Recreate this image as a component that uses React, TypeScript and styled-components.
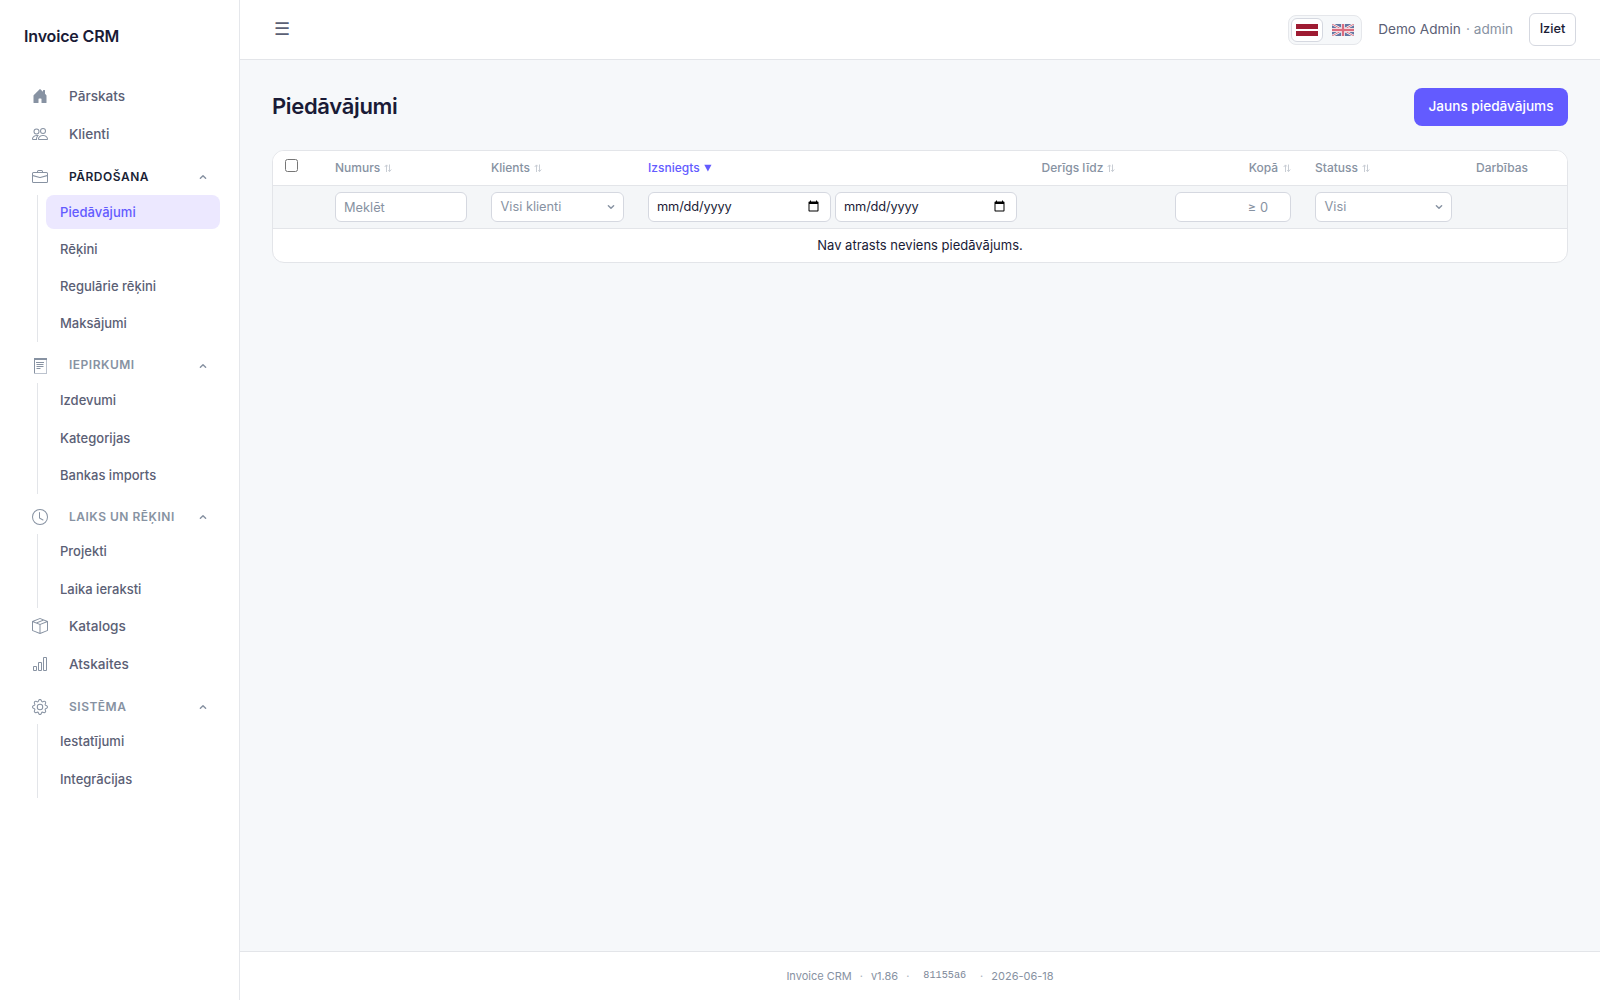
import React from "react";
import styled, { createGlobalStyle, css } from "styled-components";
import { BsHouseDoorFill, BsPeople, BsBriefcase, BsClock, BsBoxSeam, BsBarChart, BsGear } from "react-icons/bs";

const Global = createGlobalStyle`
  *, *::before, *::after { box-sizing: border-box; }
  body { margin: 0; font-family: Inter, "Noto Sans", sans-serif; font-size: 14px; line-height: 1.5; color: #1a1b36; background: #f6f8fa; }
  button, input, select { font-family: inherit; }
`;
const Shell = styled.div`display: flex; height: 1000px; width: 1600px; overflow: hidden;`;
const Sidebar = styled.aside`width: 240px; flex: none; background: #fff; border-right: 1px solid #e5e7eb;`;
const Brand = styled.div`padding: 24px 24px 0; height: 77px; font-size: 16px; line-height: 24px; font-weight: 600; letter-spacing: -0.16px;`;
const Nav = styled.nav`padding: 0 19px 0 20px;`;
const NavLink = styled.a`
  display: flex; align-items: center; height: 37.8px; padding-left: 12px;
  font-size: 13.6px; line-height: 20px; font-weight: 500; color: #5b6075;
`;
const NavIcon = styled.span`display: flex; width: 16px; margin-right: 21px; color: #8792a2;`;
const GroupHead = styled.div<{ $h: number; $pt: number; $lift: number; $active?: boolean }>`
  display: flex; align-items: center; height: ${p => p.$h}px; padding: ${p => p.$pt}px 13px 0 12px;
  font-size: 12px; line-height: 18px; font-weight: 600; letter-spacing: 0.5px; color: ${p => (p.$active ? "#1a1f36" : "#8792a2")};
  & > b { flex: 1; font-weight: 600; padding-bottom: ${p => p.$lift}px; }
`;
const SubList = styled.div<{ $h: number; $gap: number }>`
  display: flex; flex-direction: column; gap: ${p => p.$gap}px; height: ${p => p.$h}px; margin-left: 17px; padding-left: 8px; border-left: 1px solid #e3e5e9;
`;
const SubLink = styled.a<{ $active?: boolean }>`
  display: flex; align-items: center; height: 34px; flex: none; padding: 1px 0 0 14px; border-radius: 8px;
  font-size: 13px; line-height: 20px; font-weight: 500; color: #5b6075;
  ${p => p.$active && css`background: #ece8ff; color: #635bff; letter-spacing: 0.05px;`}
`;
const Main = styled.div`flex: 1; min-width: 0; display: flex; flex-direction: column;`;
const Topbar = styled.header`
  height: 60px; flex: none; display: flex; align-items: center; padding: 0 24px 0 32px; background: #fff; border-bottom: 1px solid #e3e5e9;
`;
const Burger = styled.button`border: 0; background: none; padding: 0 0 1px 2px; font-size: 18px; line-height: 24px; color: #5b6075; margin-right: auto;`;
const Langs = styled.div`display: flex; gap: 4px; width: 74px; height: 30px; padding: 2px; border: 1px solid #e5e7eb; border-radius: 8px; background: #f6f8fa;`;
const Lang = styled.span<{ $on?: boolean }>`
  display: flex; align-items: center; justify-content: center; width: 32px; height: 24px; border-radius: 6px; border: 1px solid transparent;
  ${p => (p.$on ? css`background: #fff; border-color: #d5d8e0;` : css`opacity: 0.6;`)}
`;
const User = styled.span`margin-left: 16px; padding-bottom: 1px; font-size: 13.6px; line-height: 20px; color: #5b6075; i { font-style: normal; color: #8792a2; margin-left: 1.5px; }`;
const Logout = styled.button`
  margin-left: 16px; width: 47px; height: 33px; padding: 0 0 2px; font-size: 12.8px; font-weight: 500; color: #1a1b36;
  background: #fff; border: 1px solid #d5d8e0; border-radius: 6px;
`;
const Content = styled.main`flex: 1; padding: 28px 32px;`;
const TitleRow = styled.div`display: flex; justify-content: space-between; align-items: center; height: 38px; margin-bottom: 24px;`;
const Title = styled.h1`margin: 0 0 2px; font-size: 22px; line-height: 33px; font-weight: 600; letter-spacing: -0.33px;`;
const Primary = styled.button`width: 154px; height: 38px; padding: 0 0 2px; border: 0; border-radius: 8px; background: #635bff; color: #fff; font-size: 13.6px; font-weight: 500;`;
const Card = styled.section`background: #fff; border: 1px solid #e3e5e9; border-radius: 12px; overflow: hidden;`;
const Row = styled.div<{ $filter?: boolean }>`
  display: grid; grid-template-columns: 50px 156px 157px 393.5px 145.5px 128px 161px 1fr; align-items: center;
  height: ${p => (p.$filter ? 43 : 35)}px; border-bottom: 1px solid #e3e5e9; background: ${p => (p.$filter ? "#f4f6f8" : "#fff")};
`;
const Cell = styled.div<{ $right?: boolean }>`
  display: flex; align-items: center; gap: 4px; padding: 0 12px; min-width: 0; justify-content: ${p => (p.$right ? "flex-end" : "flex-start")};
`;
const Head = styled(Cell)<{ $sorted?: boolean }>`
  gap: ${p => (p.$right ? 5 : 4)}px;
  font-size: 12px; font-weight: 500; color: ${p => (p.$sorted ? "#635bff" : "#8792a2")};
  svg { flex: none; opacity: ${p => (p.$sorted ? 1 : 0.45)}; }
`;
const Check = styled.input`margin: 0 0 5px; width: 13px; height: 13px;`;
const Input = styled.input<{ $w: number }>`
  width: ${p => p.$w}px; height: 30px; flex: none; padding: 0 8px; font-size: 12.8px; line-height: 19px; color: #1a1b36; background: #fff;
  border: 1px solid #d5d8e0; border-radius: 6px;
  &::placeholder { color: #8792a2; opacity: 1; }
  &[type="number"] { text-align: right; padding-right: 7px; }
  &[type="date"] { padding-bottom: 1px; letter-spacing: -0.15px; }
  &::-webkit-datetime-edit-month-field,
  &::-webkit-datetime-edit-day-field,
  &::-webkit-datetime-edit-year-field { padding: 0; }
`;
const Select = styled.div<{ $w: number }>`
  display: flex; align-items: center; justify-content: space-between; width: ${p => p.$w}px; height: 30px; flex: none; padding: 0 8px 0 8.5px;
  font-size: 12.8px; color: #8792a2; background: #fff; border: 1px solid #d5d8e0; border-radius: 6px;
`;
const Empty = styled.div`height: 33px; display: flex; align-items: center; justify-content: center; font-size: 13px;`;
const Footer = styled.footer`
  height: 49px; flex: none; display: flex; align-items: center; justify-content: center; background: #fff; border-top: 1px solid #e3e5e9;
  font-size: 11px; color: #8792a2;
  em { font-style: normal; opacity: 0.7; margin: 0 8px; }
  code { font-family: "Liberation Mono", monospace; font-size: 10.2px; color: #7c8798; padding: 0 6px; }
`;

const Chevron = ({ up }: { up?: boolean }) => (
  <svg width="8" height="6" viewBox="0 0 8 6" fill="none" stroke="#8792a2" strokeWidth="1.5" strokeLinecap="round" strokeLinejoin="round">
    <path d={up ? "M1.4 4.2 4 1.8 6.6 4.2" : "M1.4 1.8 4 4.2 6.6 1.8"} />
  </svg>
);
const SortIcon = () => (
  <svg width="8" height="9" viewBox="0 0 8 9" fill="none" stroke="currentColor" strokeWidth="1">
    <path d="M2.5 8v-7M0.7 3 2.5 0.9 3.7 2.4M5.5 0.5v7M4.3 6.1 5.5 7.6 7.3 5.5" />
  </svg>
);
const SortedIcon = () => (
  <svg width="8" height="8" viewBox="0 0 8 8" fill="currentColor"><path d="M0.3 0.8h7.2L3.9 7.4z" /></svg>
);
const Ledger = () => (
  <svg width="16" height="16" viewBox="0 0 16 16">
    <path fill="#8792a2" d="M2 0h13v2H3v13H2z" />
    <path fill="#bcc3ce" d="M14 2h1v14H2v-1h12z" />
    <path fill="none" stroke="#8792a2" d="M4 4.5h8M4.5 6.5h7M4.5 8.5h7M4.5 10.5h4" />
  </svg>
);
const Latvia = () => (
  <svg width="22" height="12" viewBox="0 0 22 12"><path fill="#9e1b32" d="M0 0h22v12H0z" /><path fill="#fff" d="M0 5h22v2H0z" /></svg>
);
const Britain = () => (
  <svg width="22" height="12" viewBox="0 0 60 30" preserveAspectRatio="none">
    <path fill="#012169" d="M0 0h60v30H0z" />
    <path d="m0 0 60 30M60 0 0 30" stroke="#fff" strokeWidth="6" />
    <path d="m0 0 60 30M60 0 0 30" stroke="#c8102e" strokeWidth="2.5" />
    <path d="M30 0v30M0 15h60" stroke="#fff" strokeWidth="10" />
    <path d="M30 0v30M0 15h60" stroke="#c8102e" strokeWidth="6" />
  </svg>
);

interface GroupProps { icon: React.ReactNode; name: string; items: string[]; active?: string; h: number; pt: number; lh: number; gap: number; lift?: number }
const Group = ({ icon, name, items, active, h, pt, lh, gap, lift = 0 }: GroupProps) => (
  <>
    <GroupHead $h={h} $pt={pt} $lift={lift} $active={!!active}><NavIcon>{icon}</NavIcon><b>{name}</b><Chevron up /></GroupHead>
    <SubList $h={lh} $gap={gap}>{items.map(i => <SubLink key={i} $active={i === active}>{i}</SubLink>)}</SubList>
  </>
);
const Sortable = ({ name, right }: { name: string; right?: boolean }) => <Head $right={right}>{name}<SortIcon /></Head>;

export default function App() {
  return (
    <Shell>
      <Global />
      <Sidebar>
        <Brand>Invoice CRM</Brand>
        <Nav>
          <NavLink><NavIcon><BsHouseDoorFill size={16} /></NavIcon>Pārskats</NavLink>
          <NavLink><NavIcon><BsPeople size={16} /></NavIcon>Klienti</NavLink>
          <Group icon={<BsBriefcase size={16} />} name="PĀRDOŠANA" active="Piedāvājumi" h={42.4} pt={6} lh={147} gap={3} items={["Piedāvājumi", "Rēķini", "Regulārie rēķini", "Maksājumi"]} />
          <Group icon={<Ledger />} name="IEPIRKUMI" h={41} pt={6.8} lh={111} gap={3.2} lift={1.5} items={["Izdevumi", "Kategorijas", "Bankas imports"]} />
          <Group icon={<BsClock size={16} />} name="LAIKS UN RĒĶINI" h={40} pt={6} lh={73.6} gap={3.5} items={["Projekti", "Laika ieraksti"]} />
          <NavLink><NavIcon><BsBoxSeam size={16} /></NavIcon>Katalogs</NavLink>
          <NavLink><NavIcon><BsBarChart size={16} /></NavIcon>Atskaites</NavLink>
          <Group icon={<BsGear size={16} />} name="SISTĒMA" h={40.8} pt={7} lh={74} gap={3.5} items={["Iestatījumi", "Integrācijas"]} />
        </Nav>
      </Sidebar>
      <Main>
        <Topbar>
          <Burger>☰</Burger>
          <Langs><Lang $on><Latvia /></Lang><Lang><Britain /></Lang></Langs>
          <User>Demo Admin <i>· admin</i></User>
          <Logout>Iziet</Logout>
        </Topbar>
        <Content>
          <TitleRow><Title>Piedāvājumi</Title><Primary>Jauns piedāvājums</Primary></TitleRow>
          <Card>
            <Row>
              <Cell><Check type="checkbox" /></Cell>
              <Sortable name="Numurs" />
              <Sortable name="Klients" />
              <Head $sorted>Izsniegts<SortedIcon /></Head>
              <Sortable name="Derīgs līdz" />
              <Sortable name="Kopā" right />
              <Sortable name="Statuss" />
              <Head>Darbības</Head>
            </Row>
            <Row $filter>
              <Cell />
              <Cell><Input $w={132} placeholder="Meklēt" /></Cell>
              <Cell><Select $w={133}>Visi klienti<Chevron /></Select></Cell>
              <Cell><Input $w={183} type="date" /><Input $w={182} type="date" /></Cell>
              <Cell />
              <Cell $right><Input $w={116} type="number" placeholder="≥ 0" /></Cell>
              <Cell><Select $w={137}>Visi<Chevron /></Select></Cell>
              <Cell />
            </Row>
            <Empty>Nav atrasts neviens piedāvājums.</Empty>
          </Card>
        </Content>
        <Footer>Invoice CRM<em>·</em>v1.86<em>·</em><code>81155a6</code><em>·</em>2026-06-18</Footer>
      </Main>
    </Shell>
  );
}
